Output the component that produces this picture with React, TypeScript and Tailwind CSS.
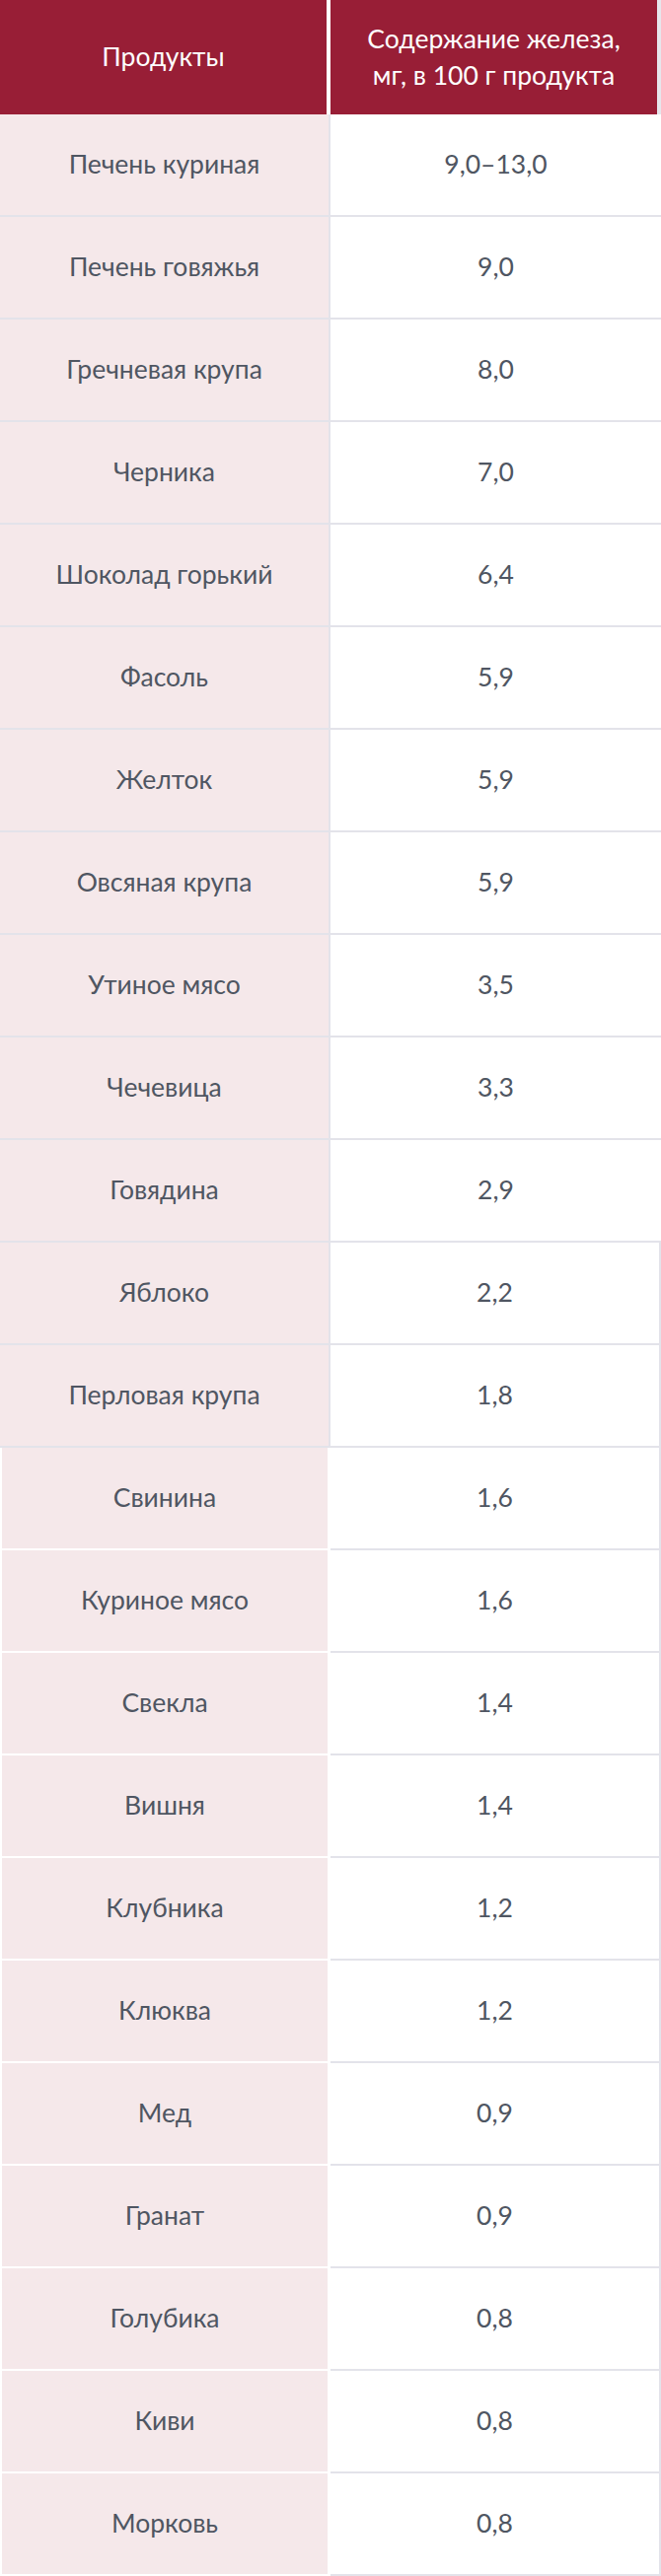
import React from 'react';

interface Item {
  name: string;
  iron: string;
}

const items: Item[] = [
  { name: 'Печень куриная', iron: '9,0–13,0' },
  { name: 'Печень говяжья', iron: '9,0' },
  { name: 'Гречневая крупа', iron: '8,0' },
  { name: 'Черника', iron: '7,0' },
  { name: 'Шоколад горький', iron: '6,4' },
  { name: 'Фасоль', iron: '5,9' },
  { name: 'Желток', iron: '5,9' },
  { name: 'Овсяная крупа', iron: '5,9' },
  { name: 'Утиное мясо', iron: '3,5' },
  { name: 'Чечевица', iron: '3,3' },
  { name: 'Говядина', iron: '2,9' },
  { name: 'Яблоко', iron: '2,2' },
  { name: 'Перловая крупа', iron: '1,8' },
  { name: 'Свинина', iron: '1,6' },
  { name: 'Куриное мясо', iron: '1,6' },
  { name: 'Свекла', iron: '1,4' },
  { name: 'Вишня', iron: '1,4' },
  { name: 'Клубника', iron: '1,2' },
  { name: 'Клюква', iron: '1,2' },
  { name: 'Мед', iron: '0,9' },
  { name: 'Гранат', iron: '0,9' },
  { name: 'Голубика', iron: '0,8' },
  { name: 'Киви', iron: '0,8' },
  { name: 'Морковь', iron: '0,8' },
];

export default function App() {
  return (
    <div className="w-[670px] bg-white font-['Lato','Noto_Sans',sans-serif] text-[26.5px] text-[#4f5662]">
      {/* header */}
      <div className="flex h-[116px]">
        <div className="w-[331px] bg-[#981e36] flex items-center justify-center text-white text-[26.5px]">
          Продукты
        </div>
        <div className="w-[4px]" />
        <div className="w-[331px] bg-[#981e36] flex items-center justify-center text-center text-white text-[26.5px] leading-[37px]">
          Содержание железа,
          <br />
          мг, в 100 г продукта
        </div>
        <div className="w-[4px] bg-[#e6e6ec]" />
      </div>

      {items.map((item, i) => {
        if (i < 13) {
          return (
            <div key={item.name} className="flex h-[104px] border-b-2 border-[#e3e3ea]">
              <div className="w-[333px] bg-[#f5e8ea] flex items-center justify-center">{item.name}</div>
              <div
                className={`flex-1 border-l-2 border-[#e3e3ea] flex items-center justify-center ${
                  i > 10 ? 'border-r-2' : ''
                }`}
              >
                {item.iron}
              </div>
            </div>
          );
        }
        return (
          <div key={item.name} className="flex h-[104px]">
            <div className="ml-[2px] w-[330px] h-[102px] bg-[#f5e8ea] flex items-center justify-center">
              {item.name}
            </div>
            <div className="ml-[3px] flex-1 border-b-2 border-r-2 border-[#e3e3ea] flex items-center justify-center">
              {item.iron}
            </div>
          </div>
        );
      })}
    </div>
  );
}
